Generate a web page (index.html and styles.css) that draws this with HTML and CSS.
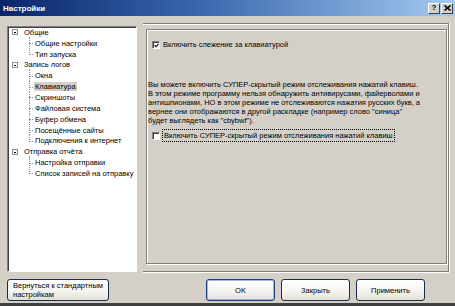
FILE: index.html
```html
<!DOCTYPE html>
<html lang="ru">
<head>
    <meta charset="UTF-8">
    <title>Настройки</title>
    <link rel="stylesheet" href="styles.css">
</head>
<body>
    <div class="window">
        <!-- заголовок окна -->
        <div class="titlebar">
            <span class="title">Настройки</span>
            <div class="caption-buttons">
                <span class="cap-btn">?</span>
                <span class="cap-btn">
                    <svg width="7" height="6" viewBox="0 0 7 6"><path d="M0.5 0.5 L6.5 5.5 M6.5 0.5 L0.5 5.5" stroke="#000" stroke-width="1.6"/></svg>
                </span>
            </div>
        </div>

        <div class="content">
            <!-- дерево разделов -->
            <div class="tree">
                <div class="node">
                    <div class="row"><span class="expander"></span>Общие</div>
                    <div class="children">
                        <div class="leaf">Общие настройки</div>
                        <div class="leaf">Тип запуска</div>
                    </div>
                </div>
                <div class="node">
                    <div class="row"><span class="expander"></span>Запись логов</div>
                    <div class="children">
                        <div class="leaf">Окна</div>
                        <div class="leaf"><span class="selected">Клавиатура</span></div>
                        <div class="leaf">Скриншоты</div>
                        <div class="leaf">Файловая система</div>
                        <div class="leaf">Буфер обмена</div>
                        <div class="leaf">Посещённые сайты</div>
                        <div class="leaf">Подключения к интернет</div>
                    </div>
                </div>
                <div class="node">
                    <div class="row"><span class="expander"></span>Отправка отчёта</div>
                    <div class="children">
                        <div class="leaf">Настройка отправки</div>
                        <div class="leaf">Список записей на отправку</div>
                    </div>
                </div>
            </div>

            <!-- страница настроек -->
            <div class="page">
                <div class="group">
                    <div class="check">
                        <span class="box">
                            <svg width="7" height="7" viewBox="0 0 7 7"><path d="M1 3 L3 5.2 L6.2 1.2" fill="none" stroke="#000" stroke-width="1.5"/></svg>
                        </span>
                        <span>Включить слежение за клавиатурой</span>
                    </div>

                    <div class="note">Вы можете включить СУПЕР-скрытый режим отслеживания нажатий клавиш.<br>В этом режиме программу нельзя обнаружить антивирусами, файерволами и<br>антишпионами, НО в этом режиме не отслеживаются нажатия русских букв, а<br>вернее они отображаются в другой раскладке (например слово "синица"<br>будет выглядеть как "cbybwf").</div>

                    <div class="check">
                        <span class="box"></span>
                        <span class="focus">Включить СУПЕР-скрытый режим отслеживания нажатий клавиш</span>
                    </div>
                </div>
            </div>
        </div>

        <!-- кнопки внизу -->
        <div class="buttons">
            <button class="btn btn-reset">Вернуться к стандартным<br>настройкам</button>
            <div class="btn-group">
                <button class="btn btn-default">OK</button>
                <button class="btn">Закрыть</button>
                <button class="btn">Применить</button>
            </div>
        </div>
    </div>
</body>
</html>
```

FILE: styles.css
```css
/* окно */
body {
    margin: 0;
    background: #d4d0c8;
    font-family: "Liberation Sans", Arial, sans-serif;
    font-size: 7.5px;
    color: #000;
}

.window {
    width: 455px;
    height: 306px;
    background: #d4d0c8;
    border-bottom: 3px solid #404040;
    box-sizing: border-box;
}

/* заголовок */
.titlebar {
    height: 16px;
    display: flex;
    align-items: center;
    justify-content: space-between;
    padding: 0 2px 0 3px;
    background: linear-gradient(to right, #0a246a 0%, #3a6ab0 45%, #a6caf0 100%);
}

.title {
    color: #fff;
    font-weight: bold;
    font-size: 8px;
}

.caption-buttons {
    display: flex;
    gap: 1px;
}

.cap-btn {
    width: 12px;
    height: 11px;
    display: flex;
    align-items: center;
    justify-content: center;
    background: #d4d0c8;
    border: 1px solid;
    border-color: #fff #404040 #404040 #fff;
    box-sizing: border-box;
    font-weight: bold;
    font-size: 8px;
    line-height: 1;
}

/* основная часть */
.content {
    display: grid;
    grid-template-columns: 130px 306px;
    column-gap: 6px;
    padding: 7px 0 0 7px;
}

/* дерево */
.tree {
    margin-top: 3px;
    height: 246px;
    background: #fff;
    border: 1px solid;
    border-color: #808080 #fff #fff #808080;
    box-shadow: inset 1px 1px 0 #404040;
    box-sizing: border-box;
    padding: 0 0 0 4px;
}

.row,
.leaf {
    height: 10.85px;
    display: flex;
    align-items: center;
    white-space: nowrap;
}

.expander {
    position: relative;
    width: 6px;
    height: 6px;
    border: 1px solid #909090;
    box-sizing: border-box;
    margin-right: 6px;
    background: #fff;
}

.expander::after {
    content: "";
    position: absolute;
    left: 1px;
    top: 2px;
    width: 2px;
    height: 1px;
    background: #000;
}

.children {
    margin-left: 17px;
}

.leaf {
    position: relative;
    padding-left: 6px;
}

/* линии дерева */
.leaf::before {
    content: "";
    position: absolute;
    left: 0;
    top: -1px;
    height: calc(100% + 1px);
    border-left: 1px dotted #909090;
}

.leaf:last-child::before {
    height: 50%;
}

.leaf::after {
    content: "";
    position: absolute;
    left: 0;
    top: 50%;
    width: 4px;
    border-top: 1px dotted #909090;
}

.selected {
    background: #d4d0c8;
    padding: 0 1px;
    margin-left: -1px;
}

/* страница */
.page {
    height: 249px;
    border-top: 1px solid #808080;
    border-right: 1px solid #808080;
    border-bottom: 1px solid #808080;
    box-shadow: 0 1px 0 #fff, 1px 0 0 #fff, inset 0 1px 0 #fff;
    box-sizing: border-box;
    padding: 5px 1px 0 3px;
}

.group {
    height: 235px;
    border: 1px solid #808080;
    box-shadow: inset 1px 1px 0 #fff, 1px 1px 0 #fff;
    box-sizing: border-box;
    padding: 9px 0 0 5px;
}

.check {
    display: flex;
    align-items: center;
    gap: 3px;
    height: 11px;
    white-space: nowrap;
}

.box {
    flex: none;
    width: 8px;
    height: 8px;
    background: #fff;
    border: 1px solid;
    border-color: #808080 #fff #fff #808080;
    box-shadow: inset 1px 1px 0 #404040;
    box-sizing: border-box;
    display: flex;
    align-items: center;
    justify-content: center;
}

.box svg {
    margin: 1px 0 0 1px;
}

.focus {
    outline: 1px dotted #000;
    padding: 1px 1px;
}

.note {
    margin: 30px 0 5px -4px;
    line-height: 9px;
    white-space: nowrap;
}

/* кнопки */
.buttons {
    display: flex;
    justify-content: space-between;
    padding: 7px 30px 0 7px;
}

.btn-group {
    display: flex;
    gap: 6px;
}

.btn {
    height: 22px;
    width: 69px;
    font-family: "Liberation Sans", Arial, sans-serif;
    font-size: 7.5px;
    color: #000;
    border: 1px solid #1c2c4c;
    border-radius: 3px;
    background: linear-gradient(#ffffff 0%, #f4f3ee 60%, #e2ded4 100%);
    padding: 0;
}

.btn-reset {
    width: 102px;
    text-align: left;
    padding-left: 5px;
    line-height: 9px;
    white-space: nowrap;
}

.btn-default {
    border-color: #1c3c7c;
    box-shadow: inset 0 0 0 1px #9ab8e8;
}
```
